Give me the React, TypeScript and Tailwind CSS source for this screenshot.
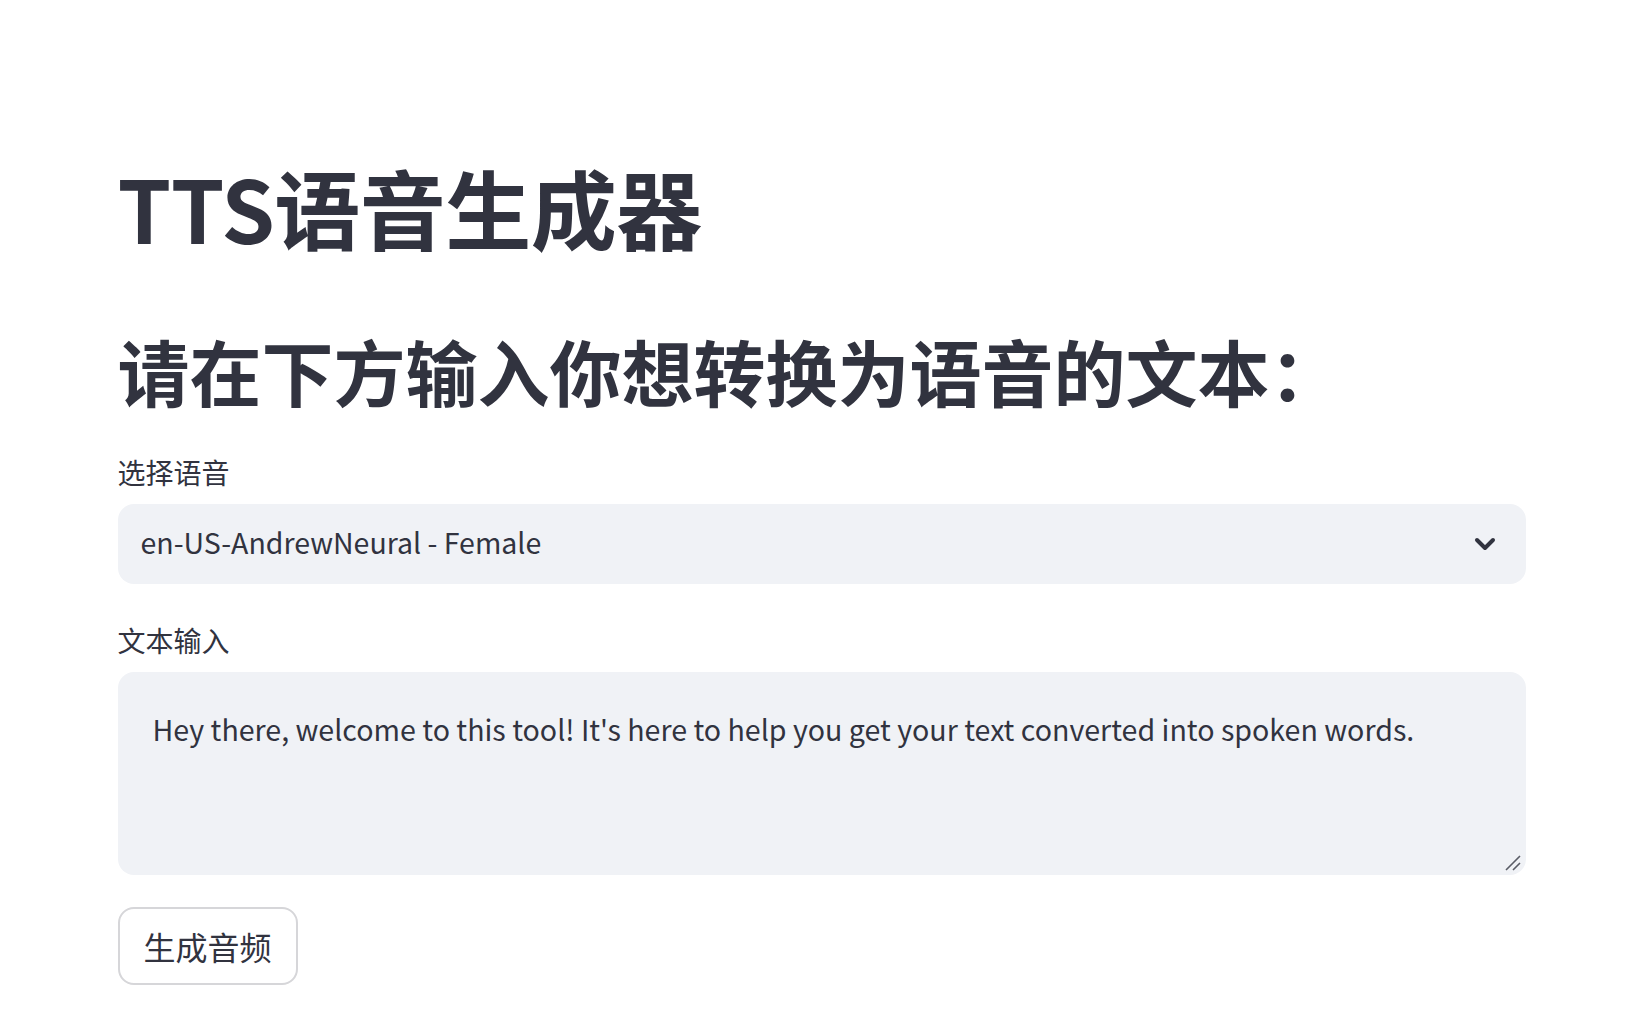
import React from 'react';

const font = { fontFamily: '"Noto Sans CJK SC", "Noto Sans", sans-serif' };

const Label = ({ text }: { text: string }) => (
  <div className="h-[48px] leading-[48px] text-[28px] text-[#31333F]">{text}</div>
);

export default function App() {
  return (
    <div className="min-h-[1011px] bg-white text-[#31333F]" style={font}>
      <div className="mx-auto w-[1472px] px-8 pt-[154px] pb-[40px]">
        <h1 className="h-[106px] leading-[106px] text-[86px] font-bold tracking-[-0.5px]">TTS语音生成器</h1>

        <h2 className="mt-[67px] h-[86px] leading-[86px] text-[72px] font-bold">请在下方输入你想转换为语音的文本：</h2>

        {/* voice select */}
        <div className="mt-[35px]">
          <Label text="选择语音" />
          <div className="mt-2 h-[80px] rounded-2xl bg-[#F0F2F6] flex items-center justify-between pl-[23px] pr-[30px]">
            <span className="text-[28.5px] -translate-y-[2px]">en-US-AndrewNeural - Female</span>
            <svg width="22" height="14" viewBox="0 0 22 14" fill="none">
              <path d="M3 3l8 8 8-8" stroke="#31333F" strokeWidth="4" strokeLinecap="round" strokeLinejoin="round" />
            </svg>
          </div>
        </div>

        {/* text input */}
        <div className="mt-8">
          <Label text="文本输入" />
          <div className="relative mt-2 h-[203px] rounded-2xl bg-[#F0F2F6] pl-[35px] pr-8 pt-[31px]">
            <p className="text-[28.6px] leading-[51px]">
              Hey there, welcome to this tool! It's here to help you get your text converted into spoken words.
            </p>
            <svg className="absolute right-[4px] bottom-[3px]" width="18" height="18" viewBox="0 0 18 18" fill="none">
              <path d="M2 16L16 2M9 16l7-7" stroke="#5a5c66" strokeWidth="1.6" />
            </svg>
          </div>
        </div>

        <button className="mt-8 h-[78px] w-[180px] rounded-2xl border-2 border-[#D6D6D9] bg-white text-[32px] text-[#31333F]">
          生成音频
        </button>
      </div>
    </div>
  );
}
